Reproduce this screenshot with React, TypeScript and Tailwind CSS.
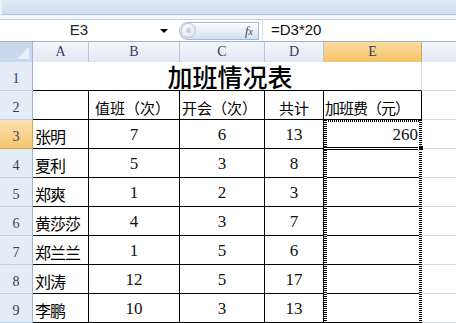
import clsx from 'clsx'

const cjk = "font-['SimSun','Noto_Sans_CJK_SC',sans-serif]"
const num = "font-['Liberation_Serif',serif]"

const people = [
    { name: '张明', b: 7, c: 6, d: 13, e: '260' },
    { name: '夏利', b: 5, c: 3, d: 8, e: '' },
    { name: '郑爽', b: 1, c: 2, d: 3, e: '' },
    { name: '黄莎莎', b: 4, c: 3, d: 7, e: '' },
    { name: '郑兰兰', b: 1, c: 5, d: 6, e: '' },
    { name: '刘涛', b: 12, c: 5, d: 17, e: '' },
    { name: '李鹏', b: 10, c: 3, d: 13, e: '' },
]

const cols = [
    { key: 'A', w: 'w-[56px]' },
    { key: 'B', w: 'w-[91px]' },
    { key: 'C', w: 'w-[85px]' },
    { key: 'D', w: 'w-[59px]' },
    { key: 'E', w: 'w-[98px]' },
]

function RowHead({ n, active }: { n: number; active?: boolean }) {
    return (
        <div
            className={clsx(
                'w-[33px] shrink-0 h-full flex items-end justify-center pb-[4px] border-r border-b text-[14px] leading-none text-[#33415a] font-["Liberation_Serif",serif]',
                active
                    ? 'bg-gradient-to-b from-[#fbe3b0] to-[#f5c56f] border-[#d9a64e]'
                    : 'bg-[#e4ecf7] border-r-[#9eb6ce] border-b-[#c3d2e5]'
            )}
        >
            {n}
        </div>
    )
}

// Marching ants round E3:E9, plus the active cell edge
function CopyMarquee() {
    return (
        <>
            <div className="absolute left-0 top-0 w-[98px] h-[2px] bg-[repeating-linear-gradient(90deg,#000_0_1px,#fff_1px_2px)]" />
            <div className="absolute left-0 top-0 w-[3px] h-[210px] bg-[repeating-linear-gradient(180deg,#000_0_1px,#fff_1px_2px)] z-10" />
            <div className="absolute left-[95px] top-0 w-[3px] h-[210px] bg-[repeating-linear-gradient(180deg,#000_0_1px,#fff_1px_2px)] z-10" />
            <div className="absolute left-0 top-[27px] w-[98px] h-[3px] border-y border-black bg-white z-10" />
            <div className="absolute left-[94px] top-[25px] w-[6px] h-[6px] bg-black border border-white z-20" />
        </>
    )
}

export default function App() {
    return (
        <div className="w-[456px] h-[323px] overflow-hidden bg-white select-none">
            {/* ribbon edge */}
            <div className="h-[15px] bg-gradient-to-b from-[#e0eaf6] to-[#cddcef] border-b border-[#a9c0de] border-l-2 border-l-[#eef3fa]" />
            <div className="h-[4px] bg-[#f4f7fb]" />

            {/* formula bar */}
            <div className="h-[23px] flex items-center border-t border-[#c0cfe0] border-b border-b-[#9fb4cc] bg-white font-['Liberation_Sans',sans-serif]">
                <div className="w-[158px] text-center text-[15px] text-[#222]">E3</div>
                <div className="w-0 h-0 border-x-[4px] border-x-transparent border-t-[4px] border-t-black ml-[2px]" />
                <div className="ml-[11px] w-[80px] h-[18px] rounded-l-full border border-[#a4b9d4] bg-gradient-to-b from-[#fbfdff] to-[#d2e0f1] flex items-center">
                    <div className="w-[15px] h-[15px] rounded-full bg-gradient-to-br from-[#ffffff] to-[#d8e2ee] border border-[#b6c6da] ml-[1px] flex items-center justify-center">
                        <div className="w-[5px] h-[5px] rounded-full bg-[#c6cfda]" />
                    </div>
                    <span className="ml-auto mr-[5px] italic font-['Liberation_Serif',serif] text-[13px] text-[#4a4a4a] leading-none">
                        f<span className="text-[10px]">x</span>
                    </span>
                </div>
                <div className="w-[1px] h-full bg-[#d5dee9] ml-[3px]" />
                <div className="ml-[8px] text-[15px] text-[#111]">=D3*20</div>
            </div>

            {/* column headers */}
            <div className="h-[20px] flex font-['Liberation_Serif',serif] text-[14px] leading-none text-[#33415a]">
                <div className="w-[33px] shrink-0 relative bg-[#c9d8ec] border-r border-[#9eb6ce]">
                    <div className="absolute right-[3px] bottom-[3px] w-0 h-0 border-l-[12px] border-l-transparent border-b-[12px] border-b-[#eaf0f8]" />
                </div>
                {cols.map((c) => (
                    <div
                        key={c.key}
                        className={clsx(
                            c.w,
                            'shrink-0 flex items-center justify-center border-r',
                            c.key === 'E'
                                ? 'bg-gradient-to-b from-[#fbdca0] to-[#f4c266] border-[#d8a553]'
                                : 'bg-gradient-to-b from-[#f2f6fb] to-[#e1e9f4] border-[#b7c7dc]'
                        )}
                    >
                        {c.key}
                    </div>
                ))}
                <div className="flex-1 bg-gradient-to-b from-[#f2f6fb] to-[#e1e9f4]" />
            </div>

            {/* row 1: title */}
            <div className="h-[29px] flex">
                <RowHead n={1} />
                <div className={clsx(cjk, 'w-[389px] shrink-0 border-b border-black border-r border-r-[#d4d9e0] flex items-end justify-center pl-[6px] text-[25px] font-medium leading-[25px] pb-[1px] text-black')}>
                    加班情况表
                </div>
                <div className="flex-1 border-b border-[#d4d9e0]" />
            </div>

            {/* row 2: headings */}
            <div className="h-[29px] flex">
                <RowHead n={2} />
                <div className="w-[56px] shrink-0 border-r border-b border-black" />
                {['值班（次）', '开会（次）', '共计', '加班费（元）'].map((t, i) => (
                    <div
                        key={t}
                        className={clsx(
                            cjk,
                            ['w-[91px]', 'w-[85px]', 'w-[59px]', 'w-[98px]'][i],
                            'shrink-0 border-r border-b border-black flex items-end pb-[4px] text-[15px] leading-none text-black whitespace-nowrap overflow-hidden',
                            i === 0 && 'pl-[6px]',
                            i === 1 && 'pl-[2px]',
                            i === 2 && 'justify-center',
                            i === 3 && 'pl-[1px] tracking-[-1px]'
                        )}
                    >
                        {t}
                    </div>
                ))}
                <div className="flex-1 border-b border-[#d4d9e0]" />
            </div>

            {/* data rows */}
            {people.map((p, i) => (
                <div key={p.name} className="h-[29px] flex">
                    <RowHead n={i + 3} active={i === 0} />
                    <div className={clsx(cjk, 'w-[56px] shrink-0 border-r border-b border-black flex items-end pb-[4px] pl-[2px] text-[16px] leading-none whitespace-nowrap tracking-[-1px]')}>
                        {p.name}
                    </div>
                    {[p.b, p.c, p.d].map((v, j) => (
                        <div
                            key={j}
                            className={clsx(
                                num,
                                ['w-[91px]', 'w-[85px]', 'w-[59px]'][j],
                                'shrink-0 border-r border-b border-black flex items-end justify-center pb-[5px] text-[17px] leading-none text-[#111]'
                            )}
                        >
                            {v}
                        </div>
                    ))}
                    <div className={clsx(num, 'relative w-[98px] shrink-0 border-r border-b border-black flex items-end justify-end pr-[3px] pb-[5px] text-[17px] leading-none text-[#111]')}>
                        {p.e}
                        {i === 0 && <CopyMarquee />}
                    </div>
                    <div className="flex-1 border-b border-[#d4d9e0]" />
                </div>
            ))}
        </div>
    )
}
